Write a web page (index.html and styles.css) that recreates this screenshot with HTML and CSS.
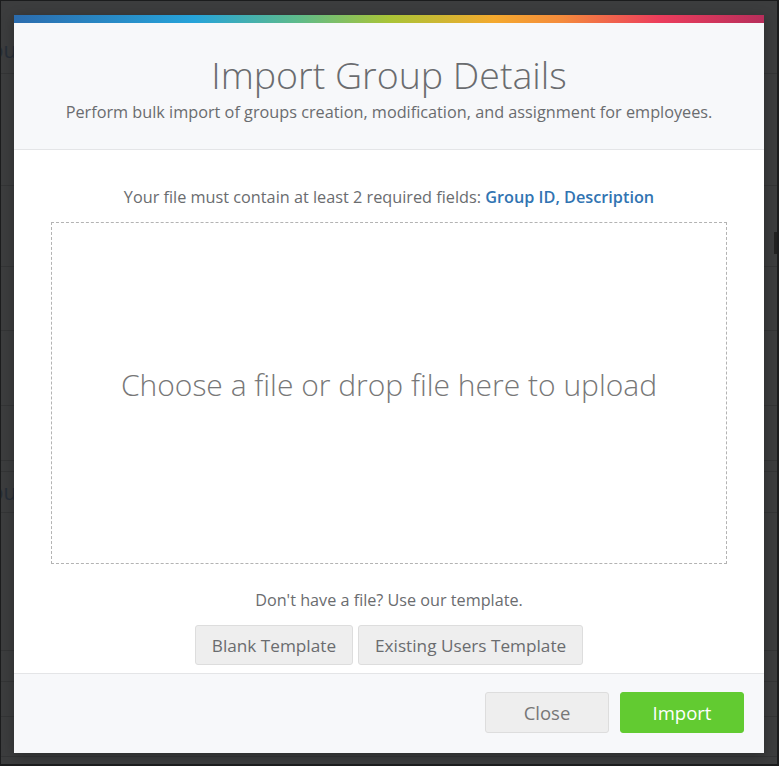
FILE: index.html
```html
<!DOCTYPE html>
<html lang="en">
<head>
<meta charset="utf-8">
<title>Import Group Details</title>
<link rel="stylesheet" href="styles.css">
</head>
<body>
<div class="screen">
  <div class="bg-page">
    <div class="bg-row r1"><span class="bg-text first">Group</span></div>
    <div class="bg-row r2"></div>
    <div class="bg-row r3"><span class="bg-mark"></span></div>
    <div class="bg-row r4"></div>
    <div class="bg-row r5"></div>
    <div class="bg-row r6"></div>
    <div class="bg-row r7"></div>
    <div class="bg-row r8"><span class="bg-text">Group</span></div>
    <div class="bg-row r9"></div>
    <div class="bg-row r10"></div>
    <div class="bg-row r11"></div>
    <div class="bg-row r12"></div>
  </div>

  <div class="modal">
    <div class="color-line"></div>
    <div class="modal-header">
      <h1 class="modal-title">Import Group Details</h1>
      <p class="modal-subtitle">Perform bulk import of groups creation, modification, and assignment for employees.</p>
    </div>
    <div class="modal-body">
      <p class="required">Your file must contain at least 2 required fields: <strong class="fields">Group ID, Description</strong></p>
      <div class="dropzone">
        <span class="drop-text">Choose a file or drop file here to upload</span>
      </div>
      <p class="template-note">Don't have a file? Use our template.</p>
      <div class="template-buttons">
        <button class="btn btn-default btn-template">Blank Template</button>
        <button class="btn btn-default btn-template">Existing Users Template</button>
      </div>
    </div>
    <div class="modal-footer">
      <button class="btn btn-default btn-footer">Close</button>
      <button class="btn btn-success btn-footer">Import</button>
    </div>
  </div>
</div>
</body>
</html>
```

FILE: styles.css
```css
* { box-sizing: border-box; }

html, body {
  margin: 0;
  padding: 0;
  background: #1b1c1d;
  font-family: "Open Sans", "Liberation Sans", Arial, sans-serif;
}

.screen {
  position: relative;
  width: 776px;
  height: 763px;
  margin: 1px 2px 2px 1px;
  background: #3c3d3e;
  overflow: hidden;
}

.bg-page {
  display: flex;
  flex-direction: column;
}

.bg-row {
  border-bottom: 1px solid #343536;
  display: flex;
  align-items: center;
  justify-content: space-between;
}

.r1 { height: 73px; align-items: flex-start; }
.r2 { height: 112px; }
.r3 { height: 81px; align-items: flex-start; }
.r4 { height: 64px; }
.r5 { height: 75px; }
.r6 { height: 55px; }
.r7 { height: 11px; }
.r8 { height: 41px; }
.r9 { height: 138px; }
.r10 { height: 31px; }
.r11 { height: 35px; }
.r12 { height: 40px; }

.bg-text {
  margin-left: -34px;
  font-size: 21px;
  line-height: 28px;
  color: #1f2a37;
  opacity: 0.75;
}

.bg-text.first { margin-top: 35px; }

.bg-mark {
  margin-left: auto;
  width: 3px;
  height: 22px;
  background: #222;
  margin-top: 46px;
}

.modal {
  position: absolute;
  left: 13px;
  top: 14px;
  width: 750px;
  height: 738px;
  background: #fff;
  display: flex;
  flex-direction: column;
  box-shadow: 0 3px 12px rgba(0, 0, 0, 0.3);
}

.color-line {
  height: 8px;
  flex: none;
  background: linear-gradient(to right,
    #2b6cae 0%,
    #26a3d9 24%,
    #5fbb8a 38%,
    #a9c437 50%,
    #f4a92e 64%,
    #f48b3c 73%,
    #ec3d5c 86%,
    #b72e5b 100%);
}

.modal-header {
  flex: none;
  background: #f7f8fa;
  border-bottom: 1px solid #e4e5e7;
  padding: 30px 10px 26px;
  text-align: center;
}

.modal-title {
  margin: 0;
  font-size: 37.5px;
  line-height: 44px;
  font-weight: 300;
  color: #6a6c6f;
}

.modal-subtitle {
  margin: 4px 0 0;
  font-size: 16.25px;
  line-height: 22px;
  color: #6a6c6f;
}

.modal-body {
  flex: 1;
  padding: 36px 37px 7px;
  display: flex;
  flex-direction: column;
  align-items: stretch;
}

.required {
  margin: 0;
  text-align: center;
  font-size: 16.25px;
  line-height: 22px;
  color: #6a6c6f;
}

.fields {
  font-weight: 600;
  color: #3174b2;
}

.dropzone {
  margin-top: 14px;
  height: 342px;
  border: 1px dashed #b3b3b3;
  display: flex;
  align-items: center;
  justify-content: center;
  padding-bottom: 18px;
}

.drop-text {
  font-size: 30px;
  font-weight: 300;
  color: #777;
}

.template-note {
  margin: 25px 0 0;
  text-align: center;
  font-size: 16.2px;
  line-height: 22px;
  color: #6a6c6f;
}

.template-buttons {
  margin-top: 14px;
  display: flex;
  justify-content: center;
  gap: 5px;
}

.btn {
  font-family: "Open Sans", "Liberation Sans", Arial, sans-serif;
  border-radius: 3px;
  cursor: pointer;
  display: inline-flex;
  align-items: center;
  justify-content: center;
}

.btn-default {
  background: #eeeeee;
  border: 1px solid #dddddd;
  color: #6a6c6f;
}

.btn-template {
  height: 40px;
  padding: 0 16px;
  font-size: 17.2px;
}

.modal-footer {
  flex: none;
  height: 80px;
  background: #f7f8fa;
  border-top: 1px solid #e4e5e7;
  padding: 18px 20px 0;
  display: flex;
  justify-content: flex-end;
  align-items: flex-start;
  gap: 11px;
}

.btn-footer {
  width: 124px;
  height: 41px;
  font-size: 18.5px;
}

.btn-footer.btn-default {
  color: #777;
}

.btn-success {
  background: #62cb31;
  border: 1px solid #62cb31;
  color: #fff;
}
```
